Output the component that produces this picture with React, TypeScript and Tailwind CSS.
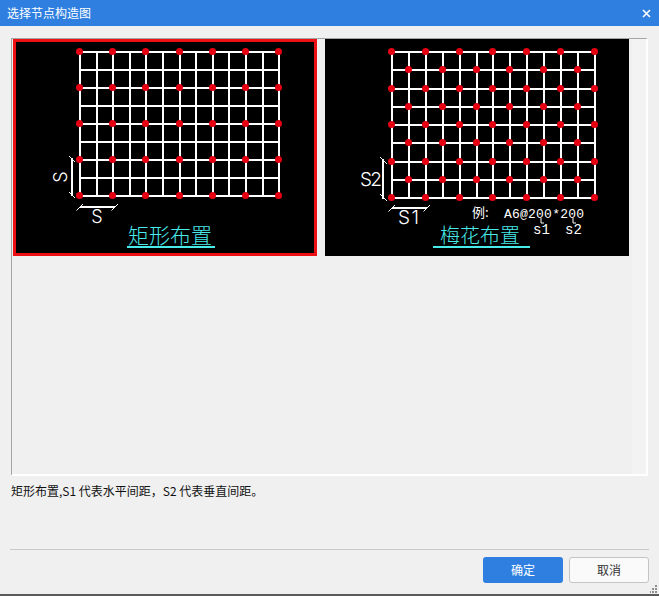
const mono = '"Liberation Mono", "Noto Sans CJK SC", monospace';
const cjk = '"Noto Sans CJK SC", sans-serif';
const thin = 'Inter, "Liberation Sans", sans-serif';
const cyan = "#48eaea";

function range(n: number) {
  return Array.from({ length: n }, (_, i) => i);
}

function Grid({ x0, y0, dx, dy, stagger }: { x0: number; y0: number; dx: number; dy: number; stagger: boolean }) {
  const x1 = Math.round(x0 + dx * 12);
  const y1 = Math.round(y0 + dy * 8);
  const dots: [number, number][] = [];
  for (const r of range(9)) {
    for (const c of range(13)) {
      if (stagger ? (r + c) % 2 === 0 : r % 2 === 0 && c % 2 === 0) {
        dots.push([Math.round(x0 + c * dx), Math.round(y0 + r * dy)]);
      }
    }
  }
  return (
    <g>
      <g shapeRendering="crispEdges">
        {range(13).map((c) => {
          const x = Math.round(x0 + c * dx);
          return <line key={c} x1={x} x2={x} y1={y0} y2={y1 + 1} stroke="#fff" strokeWidth="2" />;
        })}
        {range(9).map((r) => {
          const y = Math.round(y0 + r * dy);
          return <line key={r} x1={x0 - 1} x2={x1 + 1} y1={y} y2={y} stroke="#fff" strokeWidth="2" />;
        })}
      </g>
      {dots.map(([x, y]) => (
        <circle key={`${x}-${y}`} cx={x - 0.5} cy={y - 0.5} r="3.5" fill="#e60012" />
      ))}
    </g>
  );
}

function Tick({ x, y }: { x: number; y: number }) {
  return <line x1={x - 3.5} y1={y + 3.5} x2={x + 3} y2={y - 3} stroke="#fff" strokeWidth="1" />;
}

function RectDiagram() {
  return (
    <svg width="304" height="217" viewBox="0 0 304 217" className="block bg-black">
      <Grid x0={67} y0={13} dx={16.6} dy={18} stagger={false} />
      {/* dimension S left */}
      <line x1="59" x2="59" y1="119" y2="157" stroke="#fff" strokeWidth="2" shapeRendering="crispEdges" />
      <line x1="56" y1="117" x2="62" y2="123" stroke="#fff" strokeWidth="1" />
      <line x1="56" y1="153" x2="62" y2="159" stroke="#fff" strokeWidth="1" />
      <text
        x="0"
        y="0"
        transform="translate(54 138) rotate(-90)"
        textAnchor="middle"
        fill="#fff"
        fontSize="18"
        fontWeight="300"
        fontFamily={thin}
      >
        S
      </text>
      {/* dimension S bottom */}
      <line x1="67" x2="102" y1="168" y2="168" stroke="#fff" strokeWidth="2" shapeRendering="crispEdges" />
      <Tick x={67} y={168} />
      <Tick x={102} y={168} />
      <text x="84" y="184" textAnchor="middle" fill="#fff" fontSize="18" fontWeight="300" fontFamily={thin}>
        S
      </text>
      <text x="115" y="204" fill={cyan} fontSize="21" fontWeight="300" fontFamily={cjk}>
        矩形布置
      </text>
      <line x1="114" x2="202" y1="208" y2="208" stroke={cyan} strokeWidth="2" shapeRendering="crispEdges" />
    </svg>
  );
}

function PlumDiagram() {
  return (
    <svg width="304" height="217" viewBox="0 0 304 217" className="block bg-black">
      <Grid x0={67} y0={13} dx={16.9} dy={18.25} stagger={true} />
      {/* dimension S2 left */}
      <line x1="58" x2="58" y1="120" y2="160" stroke="#fff" strokeWidth="2" shapeRendering="crispEdges" />
      <line x1="55" y1="118" x2="62" y2="125" stroke="#fff" strokeWidth="1" />
      <line x1="55" y1="155" x2="62" y2="162" stroke="#fff" strokeWidth="1" />
      <text x="35" y="147" fill="#fff" fontSize="19" fontWeight="300" fontFamily={thin} textLength="22">
        S2
      </text>
      {/* dimension S1 bottom */}
      <line x1="67" x2="102" y1="169" y2="169" stroke="#fff" strokeWidth="2" shapeRendering="crispEdges" />
      <Tick x={67} y={169} />
      <Tick x={102} y={169} />
      <text x="73" y="185" fill="#fff" fontSize="19" fontWeight="300" fontFamily={thin} textLength="21">
        S1
      </text>
      <text x="147" y="178" fill="#fff" fontSize="13" fontFamily={cjk}>
        例:
      </text>
      <text x="179" y="179" fill="#fff" fontSize="13" fontFamily={mono} textLength="80">
        A6@200*200
      </text>
      <path d="M 216 179 v 5 h 3 M 248 179 v 5 h 3" fill="none" stroke="#fff" strokeWidth="1" />
      <text x="208" y="195" fill="#fff" fontSize="14" fontFamily={mono}>
        s1
      </text>
      <text x="240" y="195" fill="#fff" fontSize="14" fontFamily={mono}>
        s2
      </text>
      <text x="115" y="204" fill={cyan} fontSize="20" fontWeight="300" fontFamily={cjk}>
        梅花布置
      </text>
      <line x1="108" x2="205" y1="208" y2="208" stroke={cyan} strokeWidth="2" shapeRendering="crispEdges" />
    </svg>
  );
}

export default function App() {
  return (
    <div
      className="relative w-[659px] h-[596px] flex flex-col bg-[#f0f0f0] border-b-2 border-[#5a5a5a] overflow-hidden"
      style={{ fontFamily: cjk }}
    >
      <div className="h-[26px] shrink-0 bg-[#2f7fe0] flex items-center justify-between pl-[7px] pr-[8px] text-white text-[12px]">
        <span>选择节点构造图</span>
        <svg width="9" height="9" viewBox="0 0 9 9">
          <path d="M1 1 L8 8 M8 1 L1 8" stroke="#fff" strokeWidth="1.6" />
        </svg>
      </div>

      <div className="mt-[12px] mx-[11px] h-[438px] shrink-0 flex border-t border-l border-t-[#a5a5a5] border-l-[#a5a5a5] border-b-2 border-r-2 border-b-white border-r-white">
        <div className="flex-1 flex items-start gap-2 pl-px">
          <div className="outline-3 -outline-offset-3 outline-[#ec0f14]">
            <RectDiagram />
          </div>
          <PlumDiagram />
        </div>
        <div className="w-[14px] bg-[#f3f3f3]" />
      </div>

      <p className="mt-[7px] ml-[11px] text-[12px] leading-[16px] text-[#111]">
        矩形布置,S1 代表水平间距，S2 代表垂直间距。
      </p>

      <div className="mt-[50px] mx-[10px] border-t border-[#c9c9c9]" />

      <div className="mt-[7px] mr-[10px] flex justify-end gap-[6px] text-[12px]">
        <button className="w-[80px] h-[26px] rounded-[3px] bg-[#2f7fe0] text-white">确定</button>
        <button className="w-[80px] h-[26px] rounded-[3px] bg-[#fafafa] border border-[#c4c4c4] text-[#333]">
          取消
        </button>
      </div>

      {/* resize grip */}
      <svg width="8" height="8" viewBox="0 0 8 8" className="absolute right-[1px] bottom-[1px]" fill="#8f8f8f">
        <rect x="5" y="0" width="2" height="2" />
        <rect x="2" y="3" width="2" height="2" />
        <rect x="5" y="3" width="2" height="2" />
        <rect x="-1" y="6" width="2" height="2" />
        <rect x="2" y="6" width="2" height="2" />
        <rect x="5" y="6" width="2" height="2" />
      </svg>
    </div>
  );
}
